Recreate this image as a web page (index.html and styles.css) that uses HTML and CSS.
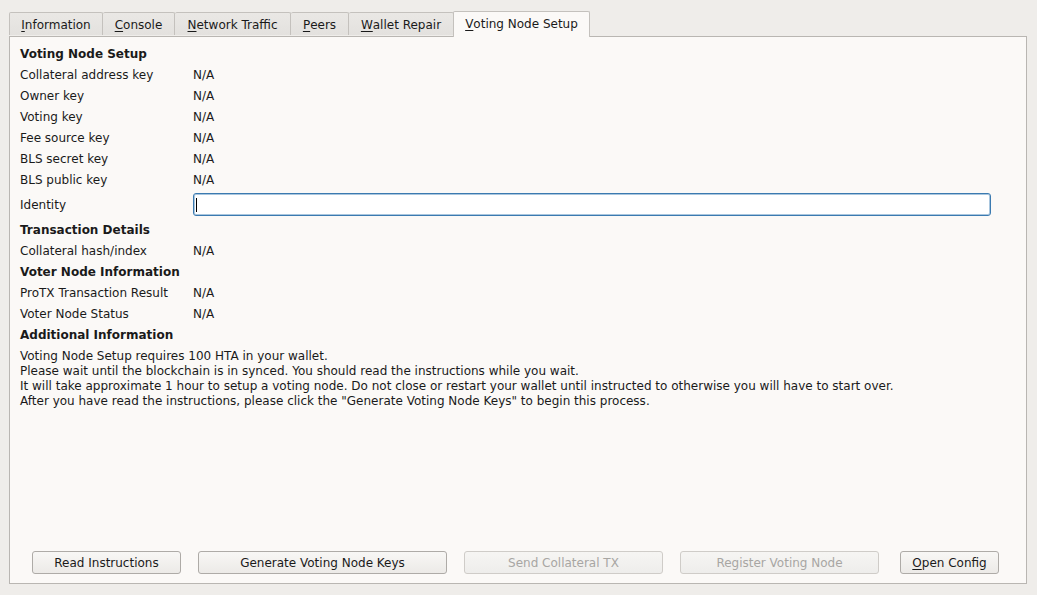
FILE: index.html
```html
<!DOCTYPE html>
<html>
<head>
<meta charset="utf-8">
<link rel="stylesheet" href="styles.css">
</head>
<body>
<div class="window">
  <div class="tabbar">
    <div class="tab first t94"><u>I</u>nformation</div>
    <div class="tab t72"><u>C</u>onsole</div>
    <div class="tab t116"><u>N</u>etwork Traffic</div>
    <div class="tab t58"><u>P</u>eers</div>
    <div class="tab t105"><u>W</u>allet Repair</div>
    <div class="tab active t137"><u>V</u>oting Node Setup</div>
  </div>
  <div class="panel">
    <div class="form">
      <div class="heading">Voting Node Setup</div>
      <div class="label">Collateral address key</div><div class="value">N/A</div>
      <div class="label">Owner key</div><div class="value">N/A</div>
      <div class="label">Voting key</div><div class="value">N/A</div>
      <div class="label">Fee source key</div><div class="value">N/A</div>
      <div class="label">BLS secret key</div><div class="value">N/A</div>
      <div class="label">BLS public key</div><div class="value">N/A</div>
      <div class="label tall">Identity</div><div class="value tall"><div class="input"><span class="caret"></span></div></div>
      <div class="heading">Transaction Details</div>
      <div class="label">Collateral hash/index</div><div class="value">N/A</div>
      <div class="heading">Voter Node Information</div>
      <div class="label">ProTX Transaction Result</div><div class="value">N/A</div>
      <div class="label">Voter Node Status</div><div class="value">N/A</div>
      <div class="heading">Additional Information</div>
    </div>
    <div class="info">
      <div>Voting Node Setup requires 100 HTA in your wallet.</div>
      <div>Please wait until the blockchain is in synced. You should read the instructions while you wait.</div>
      <div>It will take approximate 1 hour to setup a voting node. Do not close or restart your wallet until instructed to otherwise you will have to start over.</div>
      <div>After you have read the instructions, please click the "Generate Voting Node Keys" to begin this process.</div>
    </div>
    <div class="buttons">
      <div class="btn w149">Read Instructions</div>
      <div class="btn w249">Generate Voting Node Keys</div>
      <div class="btn w199 disabled">Send Collateral TX</div>
      <div class="btn w199 disabled">Register Voting Node</div>
      <div class="btn w99"><u>O</u>pen Config</div>
    </div>
  </div>
</div>
</body>
</html>
```
FILE: styles.css
```css
html, body {
  margin: 0;
  padding: 0;
  background: #efedea;
  font-family: "DejaVu Sans", sans-serif;
  font-size: 12px;
  color: #1a1a1a;
}
.window {
  width: 1037px;
  height: 595px;
  padding: 10px 10px 0 9px;
  box-sizing: border-box;
  display: flex;
  flex-direction: column;
}
.tabbar {
  display: flex;
  align-items: flex-end;
  height: 26px;
  position: relative;
  z-index: 1;
}
.tab {
  height: 23px;
  box-sizing: border-box;
  padding-top: 1px;
  display: flex;
  align-items: center;
  justify-content: center;
  border: 1px solid #c4c1bd;
  border-bottom: none;
  border-left: none;
  border-radius: 2px 2px 0 0;
  background: linear-gradient(#eae8e5, #e3e1de);
  color: #1a1a1a;
  margin-bottom: 1px;
  white-space: nowrap;
}
.t94 { width: 94px; }
.t72 { width: 72px; }
.t116 { width: 116px; }
.t58 { width: 58px; }
.t105 { width: 105px; }
.t137 { width: 137px; }
.tab.first { border-left: 1px solid #c4c1bd; }
.tab u, .btn u { text-decoration: underline; text-underline-offset: 2px; }
.tab.active {
  height: 26px;
  margin-bottom: -1px;
  background: #fbf9f7;
  border-left: 1px solid #c4c1bd;
  margin-left: -1px;
  padding-top: 0;
  padding-bottom: 2px;
}
.panel {
  height: 548px;
  box-sizing: border-box;
  border: 1px solid #b9b6b2;
  background: #fbf9f7;
  padding: 6px 10px 9px 10px;
  display: flex;
  flex-direction: column;
}
.form {
  display: grid;
  grid-template-columns: 173px 1fr;
  grid-auto-rows: auto;
}
.heading {
  grid-column: 1 / span 2;
  font-weight: bold;
  display: flex;
  align-items: center;
  height: 21px;
}
.label, .value {
  display: flex;
  align-items: center;
  height: 21px;
}
.form .tall { height: 29px; }
.input {
  width: 798px;
  height: 23px;
  box-sizing: border-box;
  border: 1px solid #3b7ab0;
  border-radius: 3px;
  background: #ffffff;
  box-shadow: inset 0 0 0 1px #a9c6de;
  position: relative;
}
.caret {
  position: absolute;
  left: 2px;
  top: 4px;
  width: 1px;
  height: 14px;
  background: #000;
}
.info {
  margin-top: 4px;
  line-height: 15px;
}
.buttons {
  margin-top: auto;
  display: flex;
  gap: 17px;
  padding-left: 12px;
}
.btn {
  height: 23px;
  box-sizing: border-box;
  border: 1px solid #aeaba7;
  border-radius: 3px;
  background: linear-gradient(#f8f7f5, #eceae7);
  display: flex;
  align-items: center;
  justify-content: center;
  color: #1a1a1a;
}
.btn.disabled {
  color: #a8a6a3;
  border-color: #cfccc8;
  background: linear-gradient(#f6f5f3, #eeedeb);
}
.w149 { width: 149px; }
.w249 { width: 249px; }
.w199 { width: 199px; }
.w99 { width: 99px; margin-left: 4px; }
```
